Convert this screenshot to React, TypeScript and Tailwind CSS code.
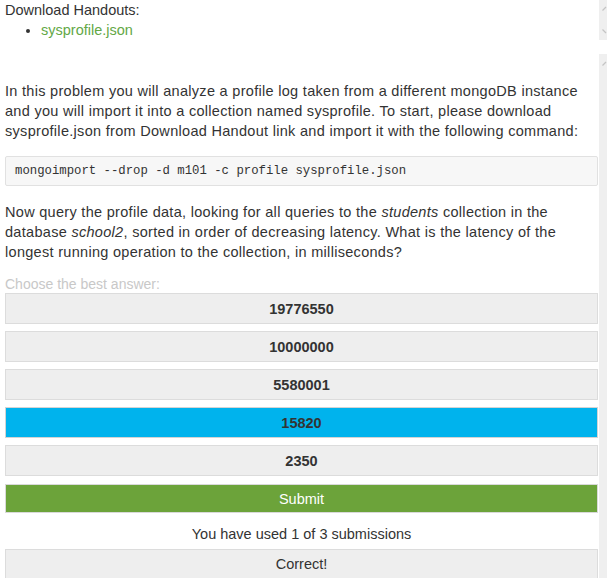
import React from "react";

const answers = ["19776550", "10000000", "5580001", "15820", "2350"];
const selected = "15820";

function ScrollStrip() {
  return (
    <aside className="flex w-[8px] flex-col">
      <div className="relative h-[40px] bg-[#efefef]">
        <svg className="absolute left-0 top-0" width="8" height="40" viewBox="0 0 8 40">
          <path d="M3.5 10.5 L7 7" stroke="#c4c4c4" strokeWidth="1.3" fill="none" />
          <path d="M3.5 29.5 L7 33" stroke="#c4c4c4" strokeWidth="1.3" fill="none" />
        </svg>
      </div>
      <div className="h-[14px]" />
      <div className="relative flex-1 bg-[#efefef]">
        <svg className="absolute left-0 top-0" width="8" height="20" viewBox="0 0 8 20">
          <path d="M3.5 11.5 L7 8" stroke="#c4c4c4" strokeWidth="1.3" fill="none" />
        </svg>
      </div>
    </aside>
  );
}

export default function App() {
  return (
    <div className="flex h-[578px] w-[607px] overflow-hidden bg-white font-['Liberation_Sans',Arial,sans-serif] text-[#333]">
      <main className="w-[599px] pl-[5px] pr-[1px] text-[14.5px] leading-[20px]">
        <div>Download Handouts:</div>
        <ul className="list-disc pl-[36px]">
          <li>
            <a href="#" className="text-[#63a846]">
              sysprofile.json
            </a>
          </li>
        </ul>

        <p className="mt-[41px] tracking-[0.3px]">
          In this problem you will analyze a profile log taken from a different mongoDB instance
          <br />
          and you will import it into a collection named sysprofile. To start, please download
          <br />
          sysprofile.json from Download Handout link and import it with the following command:
        </p>

        <pre className="mt-[15px] h-[30px] rounded-[2px] border border-[#e1e1e1] bg-[#f7f7f7] pl-[9px] font-['Liberation_Mono',monospace] text-[12.3px] leading-[28px] text-[#333]">
          mongoimport --drop -d m101 -c profile sysprofile.json
        </pre>

        <p className="mt-[16px] tracking-[0.3px]">
          Now query the profile data, looking for all queries to the <em>students</em> collection in the
          <br />
          database <em>school2</em>, sorted in order of decreasing latency. What is the latency of the
          <br />
          longest running operation to the collection, in milliseconds?
        </p>

        <div className="mt-[14px] text-[14px] leading-[16px] text-[#c8c8c8]">Choose the best answer:</div>

        <div className="mt-[1px] flex flex-col gap-[7px]">
          {answers.map((a) => (
            <div
              key={a}
              className={`flex h-[31px] items-center justify-center border font-bold ${
                a === selected ? "border-[#d4d4d4] bg-[#00b3ed]" : "border-[#dcdcdc] bg-[#eeeeee]"
              }`}
            >
              {a}
            </div>
          ))}
        </div>

        <button className="mt-[8px] flex h-[29px] w-full items-center justify-center border border-[#d9d9d9] bg-[#6ca33a] text-white">
          Submit
        </button>

        <div className="mt-[11px] text-center">You have used 1 of 3 submissions</div>

        <div className="mt-[5px] flex h-[30px] items-center justify-center border border-[#dcdcdc] bg-[#eeeeee]">
          Correct!
        </div>
      </main>
      <ScrollStrip />
    </div>
  );
}
